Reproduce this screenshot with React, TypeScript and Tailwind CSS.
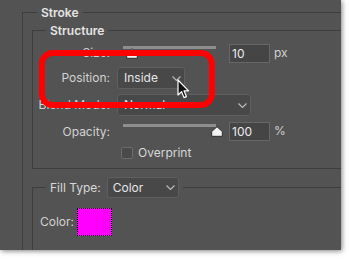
import React from "react";

const font = { fontFamily: "Inter, 'Noto Sans', sans-serif" };

function Chevron() {
  return (
    <svg width="9" height="5" viewBox="0 0 9 5" fill="none" stroke="#b8b8b8" strokeWidth="1.2">
      <path d="M0.5 0.5 L4.5 4.5 L8.5 0.5" />
    </svg>
  );
}

function Select({ value, className }: { value: string; className: string }) {
  return (
    <div
      className={`flex items-center justify-between rounded-[3px] border border-[#5f5f5f] bg-[#484848] pr-[3px] text-[12px] text-[#e6e6e6] ${className}`}
    >
      <span>{value}</span>
      <Chevron />
    </div>
  );
}

function Thumb({ left }: { left: number }) {
  return (
    <svg
      className="absolute top-[4px]"
      style={{ left }}
      width="12"
      height="11"
      viewBox="0 0 12 11"
    >
      <path d="M6 0.7 L11.3 5.6 L11.3 10.3 L0.7 10.3 L0.7 5.6 Z" fill="#f4f4f4" stroke="#2e2e2e" strokeWidth="1" />
    </svg>
  );
}

function Slider({ thumb }: { thumb: number }) {
  return (
    <div className="relative ml-[6px] h-full w-[93px]">
      <div className="absolute left-0 right-0 top-[2px] h-[3px] bg-[#8e8e8e]" />
      <Thumb left={thumb} />
    </div>
  );
}

function NumberBox({ value }: { value: string }) {
  return (
    <div className="ml-[13px] flex h-[19px] w-[41px] items-center border border-[#676767] bg-[#454545] pl-[2px] text-[12px] text-[#ececec]">
      {value}
    </div>
  );
}

function Label({ children, w }: { children: React.ReactNode; w: string }) {
  return <div className={`${w} shrink-0 text-right text-[12px] text-[#d2d2d2]`}>{children}</div>;
}

export default function App() {
  return (
    <div className="h-[261px] w-[349px] overflow-hidden bg-white" style={font}>
      <div className="relative flex h-[250px] w-[341px] flex-col overflow-hidden bg-[#535353] shadow-[1px_1px_5px_rgba(0,0,0,0.5)]">
        {/* Stroke group */}
        <div className="ml-[22px] mt-[12px] flex flex-1 flex-col border-l border-[#3e3e3e]">
          <div className="-mt-[8px] flex h-[17px] items-center">
            <div className="h-px w-[14px] bg-[#3e3e3e]" />
            <span className="px-[4px] text-[12px] font-semibold text-[#e4e4e4]">Stroke</span>
            <div className="h-px flex-1 bg-[#3e3e3e]" />
          </div>

          {/* Structure */}
          <div className="ml-[9px] mt-[9px] flex flex-col border-b border-l border-[#3e3e3e] pb-[9px]">
            <div className="-mt-[8px] flex h-[17px] items-center">
              <div className="h-px w-[13px] bg-[#3e3e3e]" />
              <span className="px-[4px] text-[12px] font-semibold text-[#e4e4e4]">Structure</span>
              <div className="h-px flex-1 bg-[#3e3e3e]" />
            </div>

            <div className="mt-[5px] flex h-[18px] items-center">
              <Label w="w-[77px]">Size:</Label>
              <div className="ml-[7px] flex h-full items-start">
                <Slider thumb={3} />
                <NumberBox value="10" />
                <span className="ml-[4px] text-[12px] text-[#d2d2d2]">px</span>
              </div>
            </div>

            <div className="mt-[5px] flex h-[22px] items-center">
              <Label w="w-[77px]">Position:</Label>
              <Select value="Inside" className="ml-[7px] h-[22px] w-[68px] pl-[6px]" />
            </div>

            <div className="mt-[5px] flex h-[22px] items-center">
              <Label w="w-[77px]">Blend Mode:</Label>
              <Select value="Normal" className="ml-[7px] h-[22px] w-[134px] pl-[6px]" />
            </div>

            <div className="mt-[6px] flex h-[19px] items-center">
              <Label w="w-[77px]">Opacity:</Label>
              <div className="ml-[7px] flex h-full items-start">
                <Slider thumb={88} />
                <NumberBox value="100" />
                <span className="ml-[4px] text-[12px] text-[#d2d2d2]">%</span>
              </div>
            </div>

            <div className="mt-[6px] flex h-[12px] items-center">
              <div className="w-[77px] shrink-0" />
              <div className="ml-[11px] h-[12px] w-[12px] rounded-[2px] border border-[#6c6c6c] bg-[#4a4a4a]" />
              <span className="ml-[5px] text-[12px] text-[#d8d8d8]">Overprint</span>
            </div>
          </div>

          {/* Fill type */}
          <div className="ml-[9px] mt-[18px] flex flex-1 flex-col border-l border-[#3e3e3e]">
            <div className="-mt-[11px] flex h-[23px] items-center">
              <div className="h-px w-[13px] bg-[#3e3e3e]" />
              <span className="pl-[4px] text-[12px] text-[#d8d8d8]">Fill Type:</span>
              <Select value="Color" className="ml-[6px] h-[21px] w-[72px] pl-[5px]" />
              <div className="ml-[4px] h-px flex-1 bg-[#3e3e3e]" />
            </div>
            <div className="mt-[9px] flex items-center">
              <Label w="w-[41px]">Color:</Label>
              <div className="ml-[3px] h-[28px] w-[35px] border border-dotted border-black bg-[#ff00ff]" />
            </div>
          </div>
        </div>

        {/* highlight */}
        <div className="absolute left-[39px] top-[50px] h-[58px] w-[176px] rounded-[14px] border-[6px] border-[#ff0000]" />

        {/* cursor */}
        <svg className="absolute left-[177px] top-[79px]" width="13" height="21" viewBox="0 0 13 21">
          <path
            d="M1 1 L1 16 L4.6 12.6 L7 18.6 L9.4 17.6 L7 11.8 L11.6 11.8 Z"
            fill="#111"
            stroke="#fff"
            strokeWidth="1.2"
            strokeLinejoin="round"
          />
        </svg>
      </div>
    </div>
  );
}
